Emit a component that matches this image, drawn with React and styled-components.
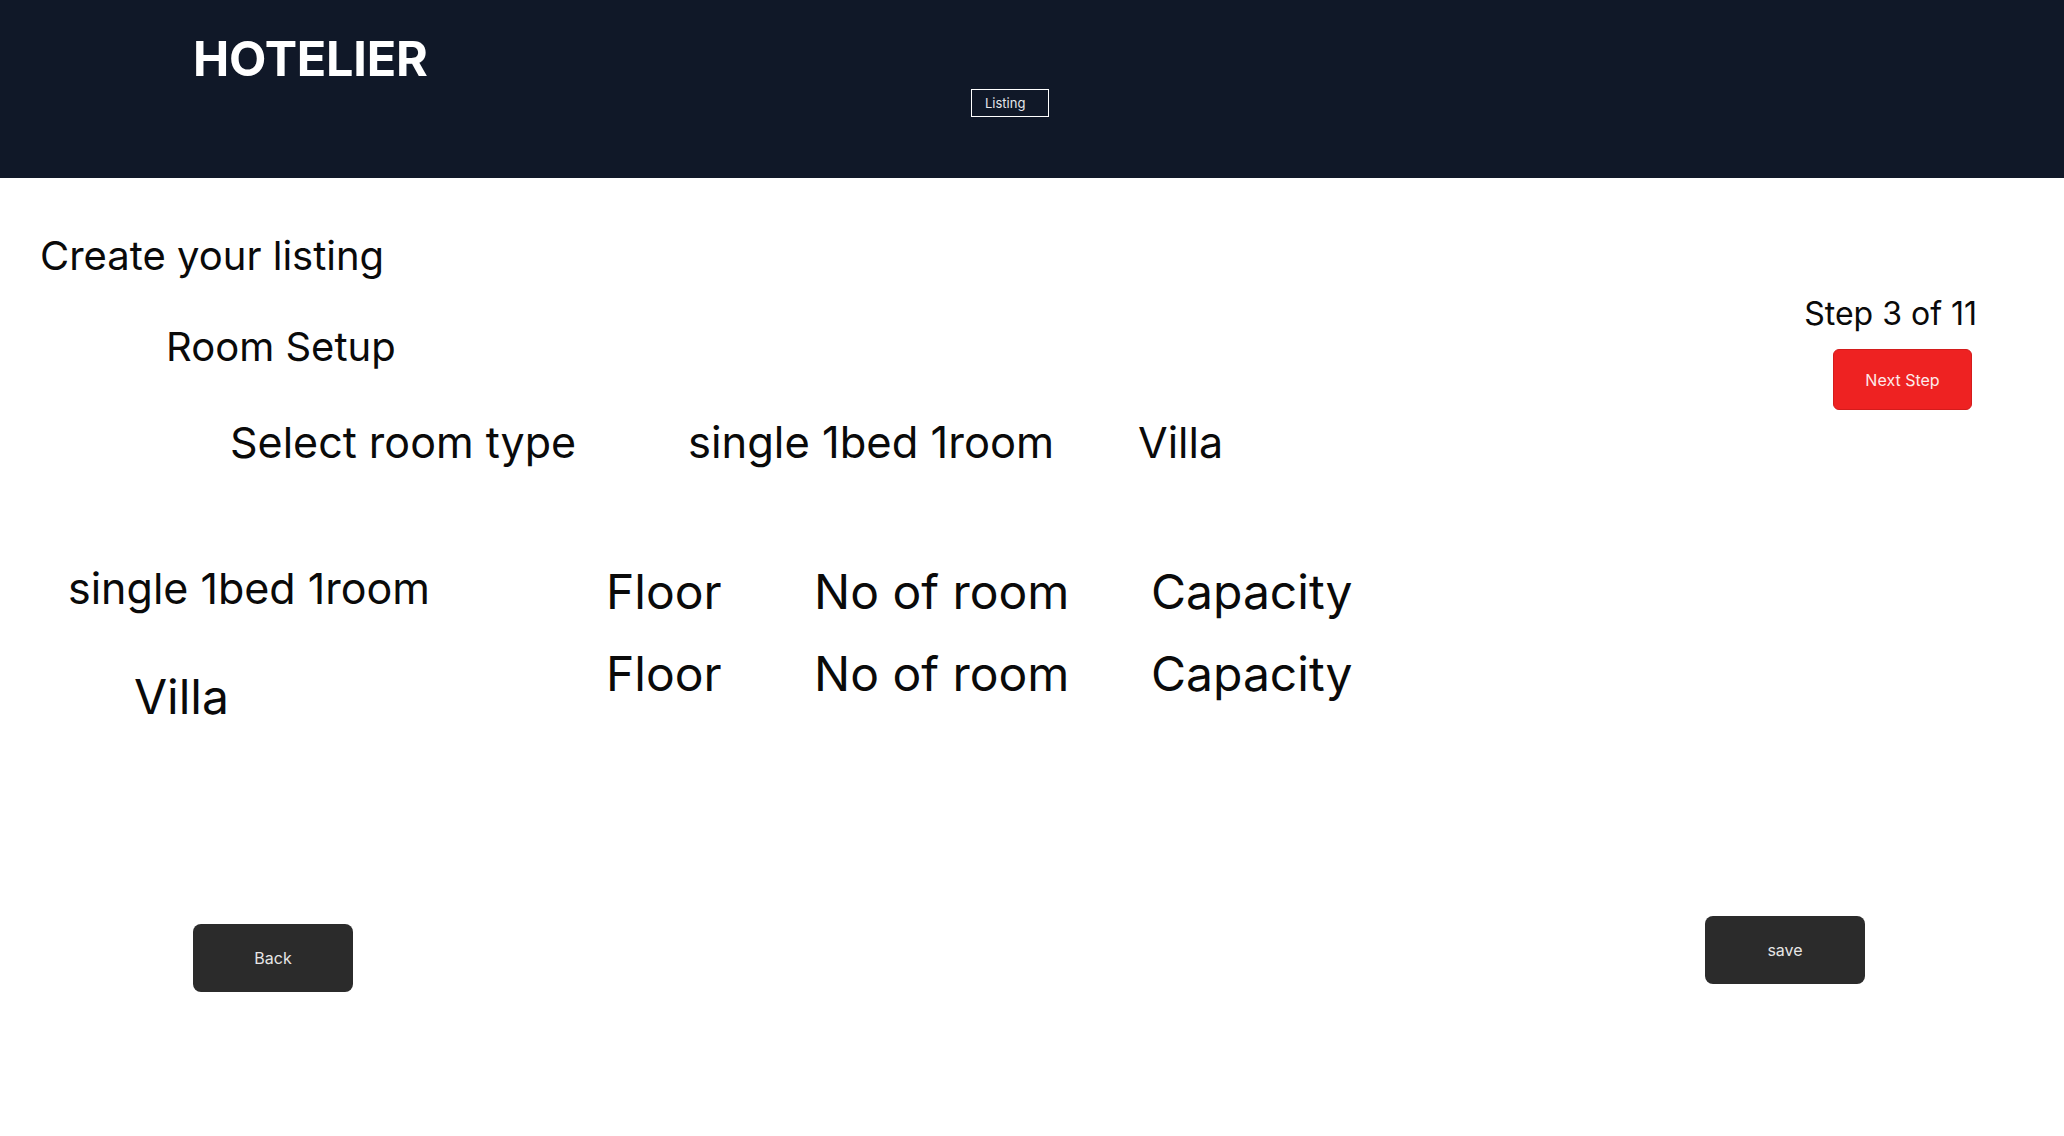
import React from "react";
import styled, { createGlobalStyle } from "styled-components";

const GlobalStyle = createGlobalStyle`
  html, body {
    margin: 0;
    padding: 0;
    background: #ffffff;
  }
  body {
    font-family: Inter, "Noto Sans", "Liberation Sans", sans-serif;
    color: #0a0a0a;
  }
  * { box-sizing: border-box; }
`;

const Page = styled.div`
  width: 2064px;
  min-height: 1136px;
  background: #ffffff;
`;

const Header = styled.header`
  height: 178px;
  background: #101828;
  display: grid;
  grid-template-columns: 971px auto;
  align-items: start;
`;

const Logo = styled.h1`
  margin: 30px 0 0 193px;
  font-size: 48.5px;
  line-height: 58px;
  font-weight: 700;
  color: #ffffff;
  letter-spacing: -0.2px;
`;

const NavButton = styled.button`
  margin-top: 89px;
  width: 78px;
  height: 28px;
  padding: 0 0 0 13px;
  background: transparent;
  border: 1px solid #ffffff;
  color: #e5e7eb;
  font-family: Inter, "Liberation Sans", sans-serif;
  font-size: 13px;
  text-align: left;
  cursor: pointer;
`;

const Main = styled.main`
  display: grid;
  grid-template-columns: 1fr auto;
`;

const Content = styled.section`
  padding-top: 54px;
`;

const Heading = styled.h2`
  margin: ${(p) => p.$mt || 0}px 0 0 ${(p) => p.$ml || 0}px;
  font-size: 40px;
  line-height: 48px;
  font-weight: 400;
`;

const TypeRow = styled.div`
  margin-top: 45px;
  padding-left: 230px;
  display: grid;
  grid-template-columns: 458px 450px auto;
  font-size: 43px;
  line-height: 53px;
`;

const TypeText = styled.span`
  font-size: ${(p) => p.$size || 43}px;
`;

const RoomGrid = styled.div`
  margin-top: 94px;
  padding-left: 68px;
  display: grid;
  grid-template-columns: 538px 208px 337px auto;
  row-gap: 24px;
  align-items: start;
`;

const RoomName = styled.span`
  font-size: ${(p) => p.$size}px;
  line-height: 1.2;
  margin-left: ${(p) => p.$ml || 0}px;
  margin-top: ${(p) => p.$mt || 0}px;
`;

const Field = styled.span`
  font-size: 48px;
  line-height: 1.2;
`;

const Aside = styled.aside`
  padding: 117px 87px 0 0;
  display: flex;
  flex-direction: column;
  align-items: flex-end;
`;

const StepLabel = styled.div`
  font-size: 32px;
  line-height: 38px;
`;

const NextButton = styled.button`
  margin: 16px 5px 0 0;
  width: 139px;
  height: 61px;
  background: #ee2222;
  border: 1px solid #d41c1c;
  border-radius: 6px;
  color: #fdeaea;
  font-family: Inter, "Liberation Sans", sans-serif;
  font-size: 16px;
  cursor: pointer;
`;

const Footer = styled.footer`
  margin-top: 191px;
  padding: 0 199px 0 193px;
  display: flex;
  justify-content: space-between;
  align-items: flex-start;
`;

const DarkButton = styled.button`
  margin-top: ${(p) => p.$mt || 0}px;
  width: 160px;
  height: 68px;
  background: #2b2b2b;
  border: none;
  border-radius: 8px;
  color: #e6e6e6;
  font-family: Inter, "Liberation Sans", sans-serif;
  font-size: 16px;
  cursor: pointer;
`;

const rooms = [
  { name: "single 1bed 1room", size: 43, ml: 0, mt: 0 },
  { name: "Villa", size: 48, ml: 66, mt: 23 },
];

export default function App() {
  return (
    <Page>
      <GlobalStyle />
      <Header>
        <Logo>HOTELIER</Logo>
        <NavButton>Listing</NavButton>
      </Header>
      <Main>
        <Content>
          <Heading $ml={40}>Create your listing</Heading>
          <Heading $ml={166} $mt={43}>Room Setup</Heading>
          <TypeRow>
            <TypeText>Select room type</TypeText>
            <TypeText $size={43.5}>single 1bed 1room</TypeText>
            <TypeText>Villa</TypeText>
          </TypeRow>
          <RoomGrid>
            {rooms.map((r) => (
              <React.Fragment key={r.name}>
                <RoomName $size={r.size} $ml={r.ml} $mt={r.mt}>{r.name}</RoomName>
                <Field>Floor</Field>
                <Field>No of room</Field>
                <Field>Capacity</Field>
              </React.Fragment>
            ))}
          </RoomGrid>
        </Content>
        <Aside>
          <StepLabel>Step 3 of 11</StepLabel>
          <NextButton>Next Step</NextButton>
        </Aside>
      </Main>
      <Footer>
        <DarkButton $mt={8}>Back</DarkButton>
        <DarkButton>save</DarkButton>
      </Footer>
    </Page>
  );
}
